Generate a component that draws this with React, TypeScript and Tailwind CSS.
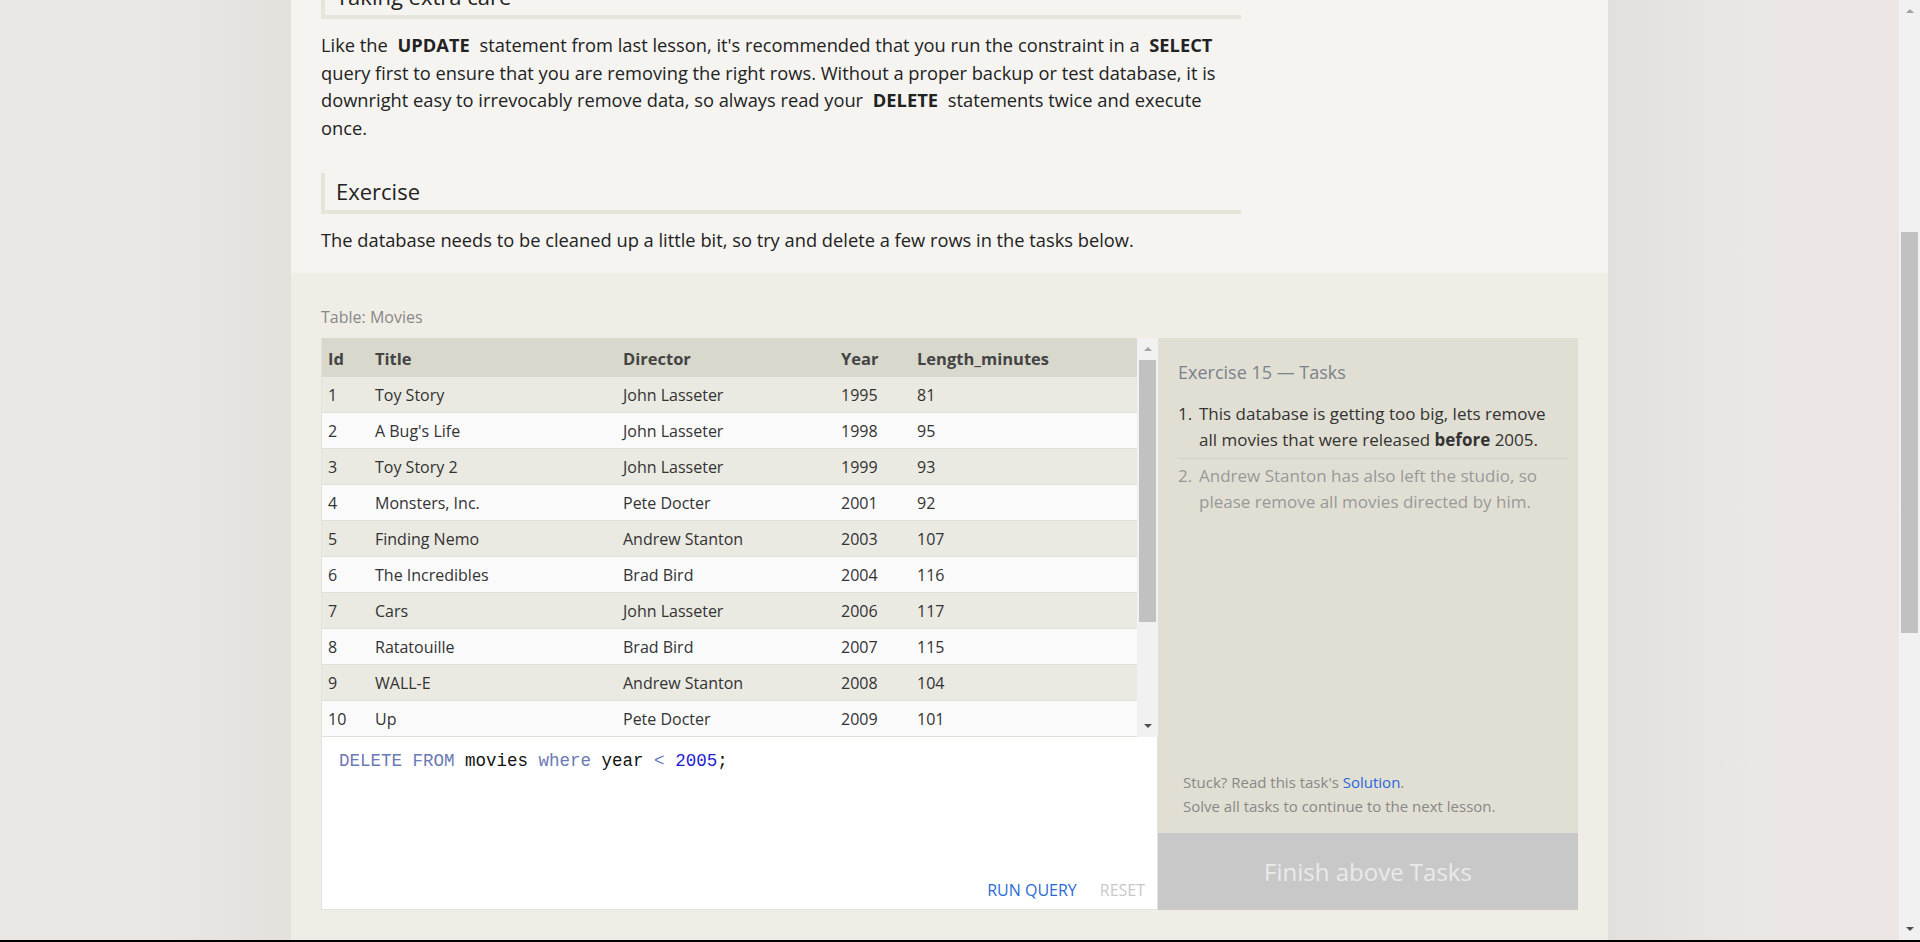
import React from 'react';

const movies = [
  [1, 'Toy Story', 'John Lasseter', 1995, 81],
  [2, "A Bug's Life", 'John Lasseter', 1998, 95],
  [3, 'Toy Story 2', 'John Lasseter', 1999, 93],
  [4, 'Monsters, Inc.', 'Pete Docter', 2001, 92],
  [5, 'Finding Nemo', 'Andrew Stanton', 2003, 107],
  [6, 'The Incredibles', 'Brad Bird', 2004, 116],
  [7, 'Cars', 'John Lasseter', 2006, 117],
  [8, 'Ratatouille', 'Brad Bird', 2007, 115],
  [9, 'WALL-E', 'Andrew Stanton', 2008, 104],
  [10, 'Up', 'Pete Docter', 2009, 101],
  [11, 'Toy Story 3', 'Lee Unkrich', 2010, 103],
];

const Kw = ({ children }: { children: React.ReactNode }) => (
  <span className="px-[5px] font-bold text-[#222]">{children}</span>
);

const Heading = ({ children, className = '' }: { children: React.ReactNode; className?: string }) => (
  <div className={`h-[41px] border-l-[4px] border-b-[4px] border-[#e6e5dc] pl-[11px] text-[22px] leading-[37px] text-[#222] ${className}`}>
    {children}
  </div>
);

const ScrollTrack = ({ thumbTop, thumbHeight, height }: { thumbTop: number; thumbHeight: number; height: string }) => (
  <div className={`relative w-[21px] shrink-0 bg-[#f1f1f1] ${height}`}>
    <div className="absolute left-[7px] top-[9px] h-0 w-0 border-x-[4px] border-b-[4px] border-x-transparent border-b-[#a3a3a3]" />
    <div className="absolute left-[2px] w-[17px] bg-[#c1c1c1]" style={{ top: thumbTop, height: thumbHeight }} />
    <div className="absolute bottom-[9px] left-[7px] h-0 w-0 border-x-[4px] border-t-[4px] border-x-transparent border-t-[#505050]" />
  </div>
);

export default function App() {
  return (
    <div className="flex h-[942px] w-[1920px] flex-col overflow-hidden bg-[#ece7e4]" style={{ fontFamily: '"Open Sans", "Noto Sans", sans-serif' }}>
      <div className="flex h-[940px]">
        <div className="w-[291px] shrink-0 bg-gradient-to-r from-[#ebe7e4] via-[#ebe7e4] to-[#e4e0dc]" />
        <div className="flex w-[1317px] shrink-0 flex-col">
          {/* lesson text */}
          <div className="h-[273px] bg-[#f5f4f0] px-[30px]">
            <div className="w-[920px]">
              <Heading className="-mt-[22px]">Taking extra care</Heading>
              <p className="mt-[12px] text-[18.3px] leading-[27.5px] text-[#222]">
                Like the <Kw>UPDATE</Kw> statement from last lesson, it's recommended that you run the constraint in a{' '}
                <Kw>SELECT</Kw>{' '}
                query first to ensure that you are removing the right rows. Without a proper backup or test database, it is downright
                easy to irrevocably remove data, so always read your <Kw>DELETE</Kw> statements twice and execute once.
              </p>
              <Heading className="mt-[32px]">Exercise</Heading>
              <p className="mt-[12px] text-[18.3px] leading-[28px] text-[#222]">
                The database needs to be cleaned up a little bit, so try and delete a few rows in the tasks below.
              </p>
            </div>
          </div>

          {/* exercise */}
          <div className="flex-1 bg-[#efede6] px-[30px] pt-[33px]">
            <div className="text-[16px] leading-[22px] text-[#888]">Table: Movies</div>
            <div className="mt-[10px] flex h-[572px]">
              <div className="flex w-[837px] flex-col">
                <div className="flex h-[399px] overflow-hidden">
                  <div className="flex-1 overflow-hidden border-l border-[#e2e1da]">
                    <div className="flex h-[39px] items-center bg-[#d9d8cc] pt-[3px] text-[16.5px] font-bold text-[#444]">
                      <div className="w-[47px] pl-[6px]">Id</div>
                      <div className="w-[248px] pl-[6px]">Title</div>
                      <div className="w-[218px] pl-[6px]">Director</div>
                      <div className="w-[76px] pl-[6px]">Year</div>
                      <div className="flex-1 pl-[6px]">Length_minutes</div>
                    </div>
                    {movies.map((m, i) => (
                      <div
                        key={m[0]}
                        className={`flex h-[36px] items-center border-b border-[#e0dfd9] text-[16px] text-[#333] ${i % 2 === 0 ? 'bg-[#eae9e2]' : 'bg-[#fafafa]'}`}
                      >
                        <div className="w-[47px] pl-[6px]">{m[0]}</div>
                        <div className="w-[248px] pl-[6px]">{m[1]}</div>
                        <div className="w-[218px] pl-[6px]">{m[2]}</div>
                        <div className="w-[76px] pl-[6px]">{m[3]}</div>
                        <div className="flex-1 pl-[6px]">{m[4]}</div>
                      </div>
                    ))}
                  </div>
                  <ScrollTrack thumbTop={22} thumbHeight={262} height="h-[399px]" />
                </div>
                <div className="relative flex-1 border border-t-0 border-[#e4e3dd] bg-white">
                  <div className="pl-[17px] pt-[12px] text-[17.5px] leading-[24px] text-[#111]" style={{ fontFamily: '"Liberation Mono", "DejaVu Sans Mono", monospace' }}>
                    <span className="text-[#6b79b6]">DELETE FROM</span> movies <span className="text-[#6b79b6]">where</span> year{' '}
                    <span className="text-[#6b79b6]">&lt;</span> <span className="text-[#1d1dd2]">2005</span>;
                  </div>
                  <div className="absolute bottom-[8px] right-[12px] flex gap-[23px] text-[16px] leading-[22px]">
                    <span className="text-[#2b6ad6]">RUN QUERY</span>
                    <span className="text-[#c9c9c9]">RESET</span>
                  </div>
                </div>
              </div>

              {/* tasks */}
              <div className="flex w-[420px] flex-col bg-[#e1dfd3]">
                <div className="flex-1 pl-[20px] pr-[10px] pt-[22px]">
                  <div className="text-[18px] leading-[24px] text-[#7a828c]">Exercise 15 — Tasks</div>
                  <ol className="mt-[17px] text-[17px] leading-[25.5px]">
                    <li className="flex border-b border-[#d3d1c5] pb-[6px] text-[#333]">
                      <span className="w-[21px] shrink-0">1.</span>
                      <span className="pr-[16px]">
                        This database is getting too big, lets remove all movies that were released <b>before</b> 2005.
                      </span>
                    </li>
                    <li className="flex pt-[4px] text-[#999]">
                      <span className="w-[21px] shrink-0">2.</span>
                      <span className="pr-[16px]">Andrew Stanton has also left the studio, so please remove all movies directed by him.</span>
                    </li>
                  </ol>
                </div>
                <div className="pb-[15px] pl-[25px] text-[15px] leading-[24px] text-[#888]">
                  <div>
                    Stuck? Read this task's <span className="text-[#2a66dd]">Solution</span>.
                  </div>
                  <div>Solve all tasks to continue to the next lesson.</div>
                </div>
                <div className="flex h-[77px] items-center justify-center bg-[#c8c8c8] text-[24px] text-[#eaeaea]">
                  Finish above Tasks
                </div>
              </div>
            </div>
          </div>
        </div>
        <div className="flex-1 bg-gradient-to-r from-[#e3dfdc] via-[#ebe7e4] to-[#ece7e4]" />
        <ScrollTrack thumbTop={232} thumbHeight={401} height="h-[940px]" />
      </div>
      <div className="h-[2px] bg-black" />
    </div>
  );
}
